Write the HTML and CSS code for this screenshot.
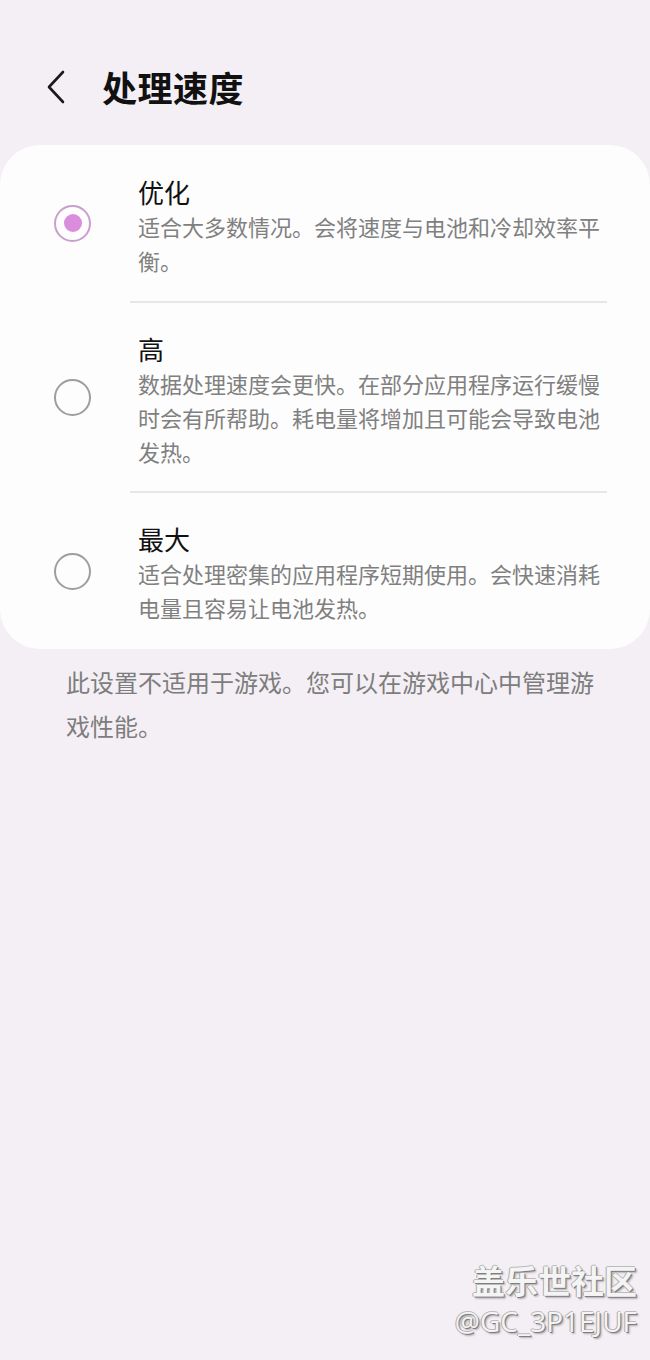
FILE: index.html
```html
<!DOCTYPE html>
<html lang="zh-CN">
<head>
  <meta charset="UTF-8" />
  <meta name="viewport" content="width=device-width, initial-scale=1" />
  <title>处理速度</title>
  <link rel="stylesheet" href="styles.css">
</head>
<body>
  <!-- Thanh tiêu đề -->
  <header class="top-bar">
    <button class="back-btn" aria-label="返回">
      <svg width="24" height="36" viewBox="0 0 24 36">
        <path d="M19 3 L5 18 L19 33" fill="none" stroke="#1a1a1a" stroke-width="2.6" stroke-linecap="round" stroke-linejoin="round"/>
      </svg>
    </button>
    <h1 class="page-title">处理速度</h1>
  </header>

  <!-- Danh sách lựa chọn -->
  <div class="option-card">
    <div class="option-row first">
      <span class="radio checked"></span>
      <div class="option-text">
        <div class="option-title">优化</div>
        <div class="option-desc">适合大多数情况。会将速度与电池和冷却效率平衡。</div>
      </div>
    </div>
    <div class="divider"></div>
    <div class="option-row">
      <span class="radio"></span>
      <div class="option-text">
        <div class="option-title">高</div>
        <div class="option-desc">数据处理速度会更快。在部分应用程序运行缓慢时会有所帮助。耗电量将增加且可能会导致电池发热。</div>
      </div>
    </div>
    <div class="divider"></div>
    <div class="option-row last">
      <span class="radio"></span>
      <div class="option-text">
        <div class="option-title">最大</div>
        <div class="option-desc">适合处理密集的应用程序短期使用。会快速消耗电量且容易让电池发热。</div>
      </div>
    </div>
  </div>

  <p class="footnote">此设置不适用于游戏。您可以在游戏中心中管理游戏性能。</p>

  <!-- Watermark -->
  <div class="watermark">
    <div class="wm-name">盖乐世社区</div>
    <div class="wm-id">@GC_3P1EJUF</div>
  </div>
</body>
</html>
```
FILE: styles.css
```css
/* Nền tím nhạt */
body {
  margin: 0;
  min-height: 1360px;
  background-color: #f4eff5;
  color: #111;
  font-family: "Noto Sans CJK SC", "Noto Sans", sans-serif;
  position: relative;
}
/* Thanh tiêu đề */
.top-bar {
  display: flex;
  align-items: center;
  height: 176px;
  padding: 0 0 0 44px;
  box-sizing: border-box;
}
.back-btn {
  background: none;
  border: none;
  padding: 0;
  margin: 0 34px 0 0;
  width: 24px;
  height: 36px;
  display: flex;
  position: relative;
  top: -1px;
}
.page-title {
  margin: 0;
  font-size: 35px;
  font-weight: 700;
  letter-spacing: 0.5px;
  position: relative;
  top: -2px;
  color: #111;
}
/* Thẻ lựa chọn */
.option-card {
  margin-top: -31px;
  background-color: #fdfdfd;
  border-radius: 40px;
}
.option-row {
  display: flex;
  align-items: center;
  padding: 0 43px 0 54px;
}
.radio {
  flex: none;
  width: 37px;
  height: 37px;
  box-sizing: border-box;
  border: 2px solid #9e9e9e;
  border-radius: 50%;
  margin-right: 47px;
  position: relative;
}
.radio.checked {
  border-color: #c9a0cc;
}
.radio.checked::after {
  content: "";
  position: absolute;
  left: 7.5px;
  top: 7.5px;
  width: 18px;
  height: 18px;
  border-radius: 50%;
  background-color: #d98ddc;
}
.option-text {
  flex: 1;
  padding: 29px 0 23px;
}
.option-row.first .option-text {
  padding: 30px 0 24px;
}
.option-row.last .option-text {
  padding-bottom: 25px;
}
.option-title {
  font-size: 26px;
  line-height: 34px;
  color: #111;
}
.option-desc {
  font-size: 22px;
  line-height: 34px;
  color: #808080;
}
.divider {
  height: 2px;
  background-color: #e8e6e8;
  margin: 0 43px 0 130px;
}
/* Ghi chú bên dưới */
.footnote {
  margin: 11px 52px 0 66px;
  font-size: 24px;
  line-height: 44px;
  color: #7d7d7d;
}
/* Watermark */
.watermark {
  position: absolute;
  right: 13px;
  top: 1258px;
  text-align: right;
  color: #f4f4f4;
  text-shadow: 1px 1px 0 #7e7e7e, -1px 0 0 #aaaaaa, 0 -1px 0 #bbbbbb, 2px 2px 2px rgba(0, 0, 0, 0.3);
}
.wm-name {
  font-size: 33px;
  line-height: 44px;
  font-weight: 700;
}
.wm-id {
  font-family: "Open Sans", "Noto Sans", sans-serif;
  font-size: 28px;
  line-height: 38px;
}
```
